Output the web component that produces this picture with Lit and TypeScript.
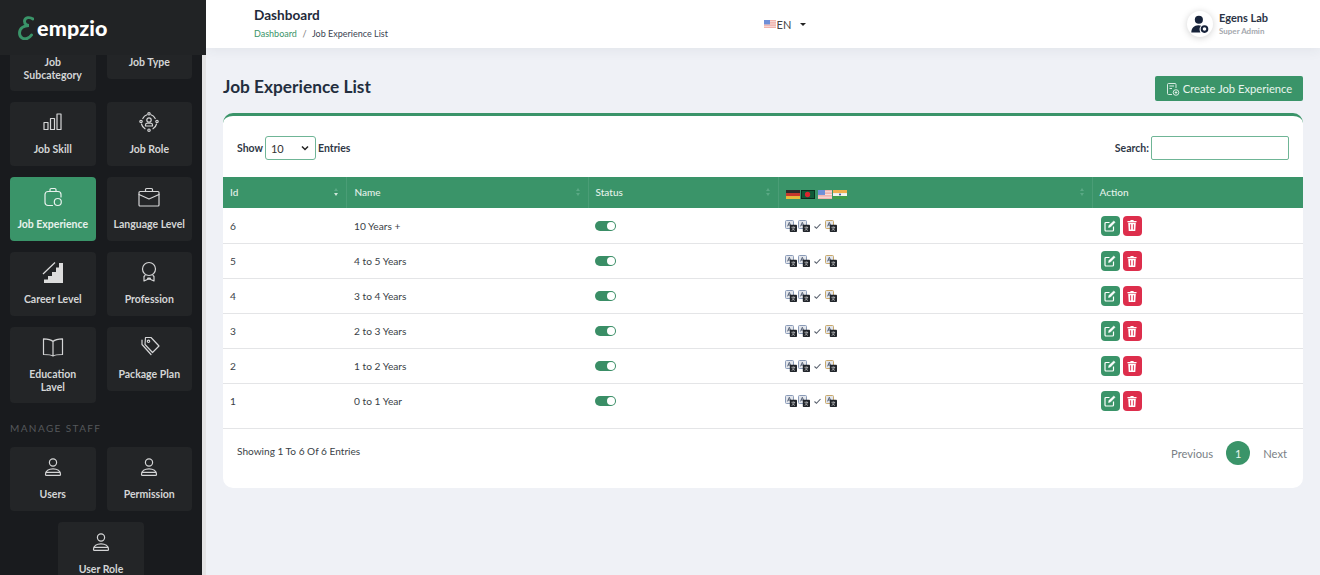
import { LitElement, html, css, svg } from "lit";
import { customElement } from "lit/decorators.js";

const stroke = (body: unknown, size = 24, vb = "0 0 24 24") =>
  html`<svg class="ic" width=${size} height=${size} viewBox=${vb} fill="none" stroke="currentColor" stroke-width="1.2" stroke-linecap="round" stroke-linejoin="round">${body}</svg>`;

const person = stroke(svg`<circle cx="12" cy="7.500" r="3.600"/><path d="M4.500 19.500c0-3.600 3.400-5.600 7.500-5.600s7.500 2 7.500 5.600c0 .6-.4.9-1 .9H5.500c-.6 0-1-.3-1-.9zM5 17.300h14"/>`);

const icons: Record<string, unknown> = {
  skill: stroke(svg`<rect x="3" y="12.500" width="4" height="7"/><rect x="9.500" y="8.500" width="4" height="11"/><rect x="16" y="4" width="4" height="15.500"/>`),
  role: stroke(svg`<circle cx="12" cy="10" r="2.200"/><path d="M8.500 16v-1c0-1.200.9-1.900 1.800-1.900h3.400c.9 0 1.800.7 1.800 1.900v1zM5.800 8.500A7.500 7.500 0 0 1 10 4.800M14 4.800a7.500 7.500 0 0 1 4.200 3.700M19.500 14a7.500 7.500 0 0 1-3.500 4.800M8 18.800A7.500 7.500 0 0 1 4.500 14"/><circle cx="12" cy="3.800" r="1.200"/><circle cx="4" cy="11.500" r="1.200"/><circle cx="20" cy="11.500" r="1.200"/><circle cx="12" cy="20.200" r="1.200"/>`),
  exp: stroke(svg`<path d="M9 6.500V4.800C9 4 9.600 3.500 10.300 3.500h3.400c.7 0 1.300.5 1.300 1.300v1.700M11.500 20.500H7c-1.700 0-3-1.300-3-3V9.500c0-1.700 1.300-3 3-3h10c1.700 0 3 1.300 3 3v2.500"/><circle cx="16.800" cy="17" r="3.500"/>`),
  lang: stroke(svg`<rect x="2" y="6.500" width="20" height="14.500" rx="1"/><path d="M8.500 6.500V4.500c0-.6.400-1 1-1h5c.6 0 1 .4 1 1v2M2 9.500 12 14l10-4.500"/>`),
  career: html`<svg class="ic" width="24" height="24" viewBox="0 0 24 24"><path fill="#dcdcdc" d="M22 3v20H3v-3.500h4V16h4v-4h4V7.500h3V3z"/><path d="M2 14 14 2.500" stroke="#dcdcdc" stroke-width="1.200" fill="none"/></svg>`,
  prof: stroke(svg`<circle cx="12" cy="9" r="6.500"/><path d="M8 15.500 7 16.500v4.500l5-2.300 5 2.300v-4.500l-1-1"/><path d="M11 18.500h2" stroke-width="2"/>`),
  edu: stroke(svg`<path d="M12 6.500C10 4.500 7 3.800 2.500 3.800V19.500c4.500 0 7.500.2 9.500 1.500 2-1.300 5-1.500 9.500-1.500V3.800C17 3.800 14 4.500 12 6.500zM12 6.500V21"/>`),
  plan: stroke(svg`<path d="M8.500 2.500h5.500l8 8.500-6.500 6.500-7.500-8z"/><path d="M5 5v4.500l9 10"/><circle cx="11.500" cy="6.300" r="1.200"/>`),
  person,
};

const flags: Record<string, unknown> = {
  de: svg`<rect width="16" height="3.400" fill="#2a2a2a"/><rect y="3.400" width="16" height="3.300" fill="#c8342c"/><rect y="6.700" width="16" height="3.300" fill="#e8b93c"/>`,
  bd: svg`<rect width="16" height="10" fill="#0f5a38"/><rect x=".5" y=".5" width="15" height="9" fill="none" stroke="#0b2a1c"/><circle cx="7.500" cy="5" r="3" fill="#d8262e"/>`,
  us: svg`<rect width="16" height="10" fill="#f1b3ad"/><path d="M0 2h16M0 5h16M0 8h16" stroke="#f4e6e4" stroke-width="1"/><rect width="8" height="5.500" fill="#6e8fd8"/>`,
  in: svg`<rect width="16" height="3.400" fill="#f0b050"/><rect y="3.400" width="16" height="3.300" fill="#f4f4f0"/><rect y="6.700" width="16" height="3.300" fill="#3f9e4a"/><circle cx="8" cy="5" r="1.200" fill="#3a5a9a"/>`,
};
const flag = (k: string, w = 14, h = 9) =>
  html`<svg class="flag" width=${w} height=${h} viewBox="0 0 16 10" preserveAspectRatio="none">${flags[k]}</svg>`;

const tr = (tone: string) => html`<svg class="tr" width="12" height="12" viewBox="0 0 12 12">
  <rect x="0.500" y="0.500" width="8" height="8" rx="1" fill="#e3e6ec" stroke=${tone} stroke-width="1"/>
  <path d="M2.500 6.400 4.300 2.300l1.800 4.100M3.100 5h2.400" stroke="#3a4860" stroke-width=".8" fill="none"/>
  <rect x="4.800" y="4.800" width="7.200" height="7.200" rx=".8" fill="#20242a"/>
  <path d="M6.400 7.300h3.800M8.300 6.500v.8M9.500 7.300c-.4 1.400-1.500 2.600-2.900 3.100M7.300 8.400c.5.900 1.400 1.700 2.700 2.100" stroke="#e8e8e8" stroke-width=".6" fill="none"/>
</svg>`;

const rows = [
  ["6", "10 Years +"],
  ["5", "4 to 5 Years"],
  ["4", "3 to 4 Years"],
  ["3", "2 to 3 Years"],
  ["2", "1 to 2 Years"],
  ["1", "0 to 1 Year"],
];

type Card = { label: string; icon: string; tall?: boolean; active?: boolean };
const cards: Card[] = [
  { label: "Job Subcategory", icon: "", tall: true },
  { label: "Job Type", icon: "" },
  { label: "Job Skill", icon: "skill" },
  { label: "Job Role", icon: "role" },
  { label: "Job Experience", icon: "exp", active: true },
  { label: "Language Level", icon: "lang" },
  { label: "Career Level", icon: "career" },
  { label: "Profession", icon: "prof" },
  { label: "Education Lavel", icon: "edu", tall: true },
  { label: "Package Plan", icon: "plan" },
];
const staff: Card[] = [
  { label: "Users", icon: "person" },
  { label: "Permission", icon: "person" },
  { label: "User Role", icon: "person" },
];

@customElement("app-root")
export class AppRoot extends LitElement {
  static styles = css`
    :host { display: flex; width: 1320px; height: 575px; overflow: hidden; font-family: Lato, "Liberation Sans", sans-serif; background: #eff1f6; color: #1f2a3a; }
    * { box-sizing: border-box; }
    svg { display: block; flex: none; }
    aside { width: 206px; flex: none; height: 575px; display: flex; flex-direction: column; background: #e4e4e5; overflow: hidden; }
    .logo { height: 55px; flex: none; background: #212325; display: flex; align-items: center; padding: 0 0 0 18px; gap: 3px; position: relative; z-index: 2; }
    .logo span { color: #fff; font-size: 21.500px; font-weight: 900; letter-spacing: .15px; margin-top: 1px; }
    nav { width: 202px; flex: 1; background: #191b1e; margin-top: -40px; padding: 0 10px; }
    .grid { display: flex; flex-wrap: wrap; justify-content: center; align-items: flex-start; gap: 11px; }
    .card { width: 85.500px; height: 64px; border-radius: 4px; background: #232527; color: #d4d5d6; display: flex; flex-direction: column; align-items: center; padding: 8px 6px 0; font-size: 10.500px; font-weight: 700; line-height: 12.500px; text-align: center; }
    .card.tall { height: 76px; }
    .card.tall .lb { max-width: 62px; }
    .card.active { background: #3a9469; color: #e8f2ed; }
    .card .lb { margin-top: 9px; }
    .card.noicon { padding-top: 41px; }
    .card.noicon .lb { margin-top: 0; }
    .sec { font-size: 10px; letter-spacing: 1.400px; color: #55585b; height: 12px; line-height: 12px; margin: 19px 0 13px; font-weight: 400; }
    main { flex: 1; min-width: 0; display: flex; flex-direction: column; }
    header { height: 48px; flex: none; background: #fff; box-shadow: 0 2px 12px rgba(40,50,70,.07); display: flex; justify-content: space-between; align-items: center; padding: 0 52px 0 48px; }
    .crumb-t { font-size: 13.600px; color: #1f2a3a; line-height: 17px; margin-top: -2px; font-weight: 700; }
    .crumb { font-size: 9px; margin-top: 3px; color: #3b4452; line-height: 13px; }
    .crumb b { color: #3a9469; font-weight: 400; }
    .crumb i { font-style: normal; color: #777; margin: 0 5.500px; }
    .lang { display: flex; align-items: center; gap: 1px; font-size: 11px; color: #444; margin-left: -4px; }
    .caret { width: 0; height: 0; border: 3px solid transparent; border-top-color: #222; border-bottom: 0; margin-left: 8px; margin-right: 1px; }
    .user { display: flex; align-items: center; gap: 6px; width: 81px; }
    .ava { width: 26px; height: 26px; border-radius: 50%; background: #fff; box-shadow: 0 1px 7px rgba(0,0,0,.18); display: flex; align-items: center; justify-content: center; flex: none; }
    .uname { font-size: 11px; font-weight: 700; color: #2b3445; line-height: 13px; white-space: nowrap; margin-top: -1px; }
    .urole { font-size: 8px; color: #a4a8ae; line-height: 11px; margin-top: 2px; white-space: nowrap; font-weight: 700; }
    .page { padding: 28px 17px 0 17px; }
    .top { display: flex; justify-content: space-between; align-items: flex-start; height: 25px; margin-bottom: 12px; }
    h1 { margin: 0; font-size: 17.300px; font-weight: 700; color: #232e3e; line-height: 22px; }
    .btn { height: 25px; width: 148px; background: #3a9469; color: #e9f4ee; font-size: 11.200px; border-radius: 2px; display: flex; align-items: center; justify-content: center; gap: 3px; }
    .panel { background: #fff; border-radius: 10px; border-top: 3px solid #3a9469; height: 375px; }
    .filters { display: flex; justify-content: space-between; align-items: flex-start; padding: 20px 14px 0 14px; height: 61px; }
    .f { display: flex; align-items: center; gap: 2px; font-size: 10.500px; font-weight: 700; color: #2f3846; }
    .sel { width: 51px; height: 24px; border: 1px solid #6fb596; border-radius: 3px; display: flex; align-items: center; justify-content: space-between; padding: 0 6px 0 5px; font-size: 11px; font-weight: 400; color: #333; background: #fff; }
    .inp { width: 138px; height: 24px; border: 1px solid #6fb596; border-radius: 2px; background: #fff; }
    table { width: 1080px; border-collapse: collapse; table-layout: fixed; font-size: 10px; }
    thead tr { height: 31px; background: #3a9469; color: #e4f1ea; }
    th { text-align: left; font-weight: 500; padding: 0 7px 2px; border-right: 1px solid #4a9d76; position: relative; }
    th:last-child { border-right: 0; }
    th .s { position: absolute; right: 8px; top: 11px; display: flex; flex-direction: column; gap: 2px; }
    th .s::before, th .s::after { content: ""; width: 0; height: 0; border: 2.500px solid transparent; }
    th .s::before { border-top: 0; border-bottom: 3px solid #5aa985; }
    th .s::after { border-bottom: 0; border-top: 3px solid #5aa985; }
    th .s.on::after { border-top-color: #cfe6da; }
    tbody tr { height: 35px; border-bottom: 1px solid #e4e5e7; }
    tbody tr:last-child { border-bottom: 0; }
    td { padding: 1px 7px 0; color: #3a3f47; font-size: 10.200px; }
    td:nth-child(2), th:nth-child(2) { padding-left: 8px; }
    .flags { display: flex; gap: 1px; margin-top: 5px; }
    .toggle { width: 21px; height: 10px; border-radius: 5px; background: #3a8e66; position: relative; }
    .toggle::after { content: ""; position: absolute; right: 1px; top: 1px; width: 8px; height: 8px; border-radius: 50%; background: #fff; }
    .trs { display: flex; align-items: center; gap: 1px; }
    .acts { display: flex; gap: 3px; padding-left: 2px; margin-left: -.5px; }
    .ab { width: 19px; height: 20px; border-radius: 4px; display: flex; align-items: center; justify-content: center; color: #fff; }
    .ab.e { background: #3a9469; }
    .ab.d { background: #dd2e4c; }
    .foot { display: flex; justify-content: space-between; align-items: center; padding: 0 16px 0 14px; margin-top: 10px; height: 49px; border-top: 1px solid #e4e5e7; font-size: 10.100px; color: #3a3f47; }
    .foot .info { margin-top: -4px; }
    .pg { display: flex; align-items: center; font-size: 11.200px; color: #7a7f86; }
    .one { width: 24px; height: 24px; border-radius: 50%; background: #3a9469; color: #e8f4ee; font-size: 11px; display: flex; align-items: center; justify-content: center; margin: 0 13px; }
  `;

  private card(c: Card) {
    const noicon = !c.icon;
    return html`<div class="card ${c.tall ? "tall" : ""} ${c.active ? "active" : ""} ${noicon ? "noicon" : ""}">
      ${noicon ? "" : icons[c.icon]}
      <div class="lb">${c.label}</div>
    </div>`;
  }

  render() {
    return html`
      <aside>
        <div class="logo">
          <svg width="16" height="24" viewBox="0 0 16 24" fill="none" stroke="#3a9469" stroke-width="2.900" stroke-linecap="round">
            <path d="M15 3C12 .8 7 1 6.500 5 6.300 8 9 9.500 11 9.500 6 9.500 1.500 12 1.500 17c0 5 4.500 6.500 7.500 5.500 2-.7 3.500-2 4.500-3.500"/>
          </svg>
          <span>empzio</span>
        </div>
        <nav>
          <div class="grid">${cards.map((c) => this.card(c))}</div>
          <div class="sec">MANAGE STAFF</div>
          <div class="grid">${staff.map((c) => this.card(c))}</div>
        </nav>
      </aside>
      <main>
        <header>
          <div>
            <div class="crumb-t">Dashboard</div>
            <div class="crumb"><b>Dashboard</b><i>/</i>Job Experience List</div>
          </div>
          <div class="lang">${flag("us", 12, 8)}<span>EN</span><span class="caret"></span></div>
          <div class="user">
            <div class="ava">
              <svg width="18" height="18" viewBox="0 0 16 16" fill="#17233a">
                <circle cx="7" cy="4.200" r="3.600"/>
                <path d="M.3 15.500c0-4 2.500-6.500 6.200-6.500 1 0 1.800.2 2.500.5-.9.900-1.400 2-1.400 3.200 0 1 .3 2 .8 2.800z"/>
                <circle cx="12" cy="12.500" r="2.500" fill="none" stroke="#17233a" stroke-width="1.800"/>
              </svg>
            </div>
            <div><div class="uname">Egens Lab</div><div class="urole">Super Admin</div></div>
          </div>
        </header>
        <div class="page">
          <div class="top">
            <h1>Job Experience List</h1>
            <div class="btn">
              <svg width="14" height="14" viewBox="0 0 14 14" fill="none" stroke="currentColor" stroke-width=".9">
                <path d="M6 12.500H2.500a1 1 0 0 1-1-1v-9a1 1 0 0 1 1-1h6.500a1 1 0 0 1 1 1V6M3.500 4h4.500M3.500 6.500h2.500"/>
                <circle cx="10" cy="10.500" r="2.800"/><path d="M10 9.200v2.600M8.700 10.500h2.600"/>
              </svg>
              Create Job Experience
            </div>
          </div>
          <div class="panel">
            <div class="filters">
              <div class="f">Show
                <div class="sel"><span>10</span>
                  <svg width="8" height="6" viewBox="0 0 8 6" fill="none" stroke="#222" stroke-width="1.500"><path d="M1 1.500l3 3 3-3"/></svg>
                </div>
                Entries</div>
              <div class="f">Search: <div class="inp"></div></div>
            </div>
            <table>
              <colgroup><col style="width:123px"/><col style="width:242px"/><col style="width:190px"/><col style="width:314px"/><col/></colgroup>
              <thead>
                <tr>
                  <th>Id<span class="s on"></span></th>
                  <th>Name<span class="s"></span></th>
                  <th>Status<span class="s"></span></th>
                  <th><div class="flags">${flag("de")}${flag("bd")}<span style="width:1px"></span>${flag("us")}${flag("in")}</div><span class="s"></span></th>
                  <th>Action</th>
                </tr>
              </thead>
              <tbody>
                ${rows.map(
                  ([id, n]) => html`<tr>
                    <td>${id}</td>
                    <td>${n}</td>
                    <td><div class="toggle"></div></td>
                    <td><div class="trs">${tr("#8a9bb8")}${tr("#8a9bb8")}
                      <svg width="13" height="12" viewBox="0 0 13 12" fill="none" stroke="#565e6b" stroke-width="1.100"><path d="M3.500 6.500l2 1.800L9.500 4"/></svg>
                      ${tr("#c9a86a")}</div></td>
                    <td><div class="acts">
                      <div class="ab e"><svg width="12" height="12" viewBox="0 0 12 12" fill="none" stroke="#fff" stroke-width="1.200"><path d="M9.500 6.500V10a1 1 0 0 1-1 1H2a1 1 0 0 1-1-1V3.500a1 1 0 0 1 1-1h3.500"/><path d="M4.500 7.500l.4-1.900L9.800.9l1.300 1.300-4.700 4.900z" fill="#fff" stroke-width=".5"/></svg></div>
                      <div class="ab d"><svg width="10" height="11" viewBox="0 0 11 12" fill="#fff"><path d="M4 0h3l.5 1H10.500v1.300H.5V1H3.500z"/><path fill-rule="evenodd" d="M1.300 3h8.400l-.6 9H1.900zM3.500 4.500v6h1v-6zm3 0v6h1v-6z"/></svg></div>
                    </div></td>
                  </tr>`
                )}
              </tbody>
            </table>
            <div class="foot">
              <div class="info">Showing 1 To 6 Of 6 Entries</div>
              <div class="pg"><span>Previous</span><div class="one">1</div><span>Next</span></div>
            </div>
          </div>
        </div>
      </main>
    `;
  }
}
